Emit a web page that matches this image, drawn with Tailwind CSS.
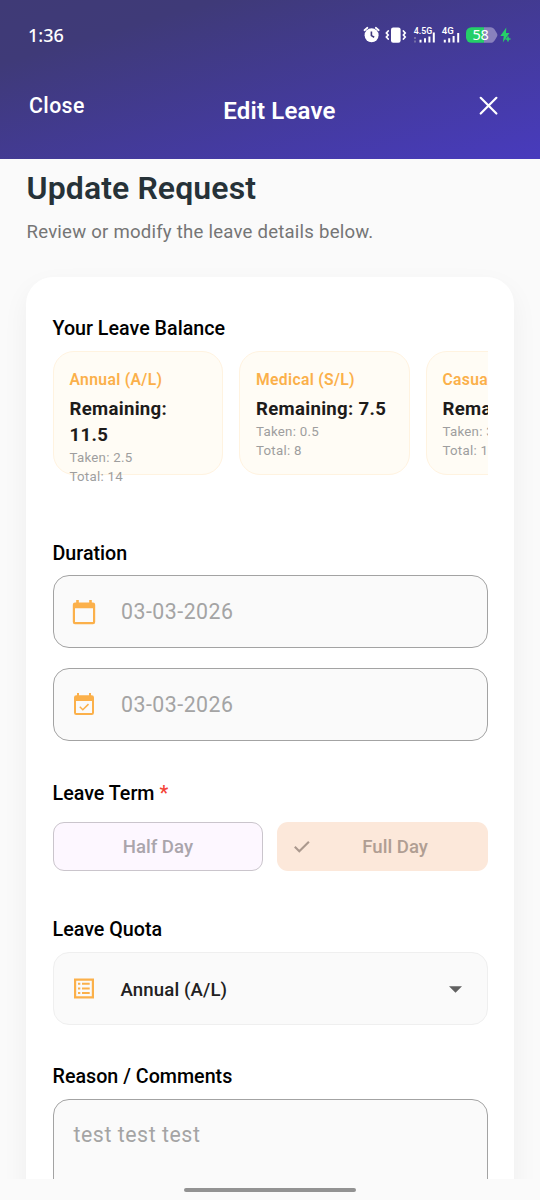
<!DOCTYPE html>
<html lang="en">
<head>
<meta charset="utf-8">
<title>Edit Leave</title>
<script src="https://cdn.jsdelivr.net/npm/@tailwindcss/browser@4"></script>
</head>
<body class="h-[1200px] w-[540px] overflow-hidden bg-[#fafafa] font-['Roboto',sans-serif] flex flex-col">
<header class="h-[159px] shrink-0 bg-[linear-gradient(to_bottom_right,#3f3a76_0%,#3f3a78_20%,#483bbd_100%)] text-white">
  <div class="flex h-[70px] items-center justify-between pl-7 pr-[26.5px]">
    <span class="font-['Noto_Sans',sans-serif] text-[18px] leading-6 font-medium">1:36</span>
    <svg class="block h-[24px] w-[152px]" viewBox="0 0 152 24">
      <g fill="none" stroke="#fff" stroke-linecap="round">
        <path d="M2.5 7.2 5.4 4.8M13.8 4.8 16.7 7.2" stroke-width="1.8"/>
        <path d="M26.2 8 24.4 10 26.2 12 24.4 14 26.2 16M41.400 8 43.200 10 41.400 12 43.200 14 41.400 16" stroke-width="1.700"/>
      </g>
      <circle cx="9.6" cy="12.2" r="7" fill="#fff"/>
      <path d="M9.4 8.4v4.2l2.8 1.6" fill="none" stroke="#40397c" stroke-width="1.6"/>
      <rect x="29" y="4.4" width="9.6" height="15.4" rx="2.2" fill="#fff"/>
      <g fill="#fff">
        <path d="M57.5 16.8h2v2.800h-2zM62 15.2h2v4.400H62zM66.400 13.400h2v6.200h-2zM70.800 9.500h2v10.100h-2z"/>
        <path d="M81.800 16.800h2v2.800h-2zM86.200 15.200h2v4.400h-2zM90.600 13h2v6.600h-2zM95.200 10h2v9.600h-2z"/>
      </g>
      <path d="M53 14v2M53 17.600v2" stroke="#8580ae" stroke-width="1.500"/>
      <text x="51.800" y="11" fill="#fff" font-family="Roboto" font-weight="600" font-size="9.600" textLength="18.500" lengthAdjust="spacingAndGlyphs">4.5G</text>
      <text x="79.800" y="11" fill="#fff" font-family="Roboto" font-weight="600" font-size="9.600" textLength="12" lengthAdjust="spacingAndGlyphs">4G</text>
      <path d="M109.500 4.200H122v15.600h-12.500a5.500 5.500 0 0 1-5.500-5.500V9.700a5.500 5.500 0 0 1 5.500-5.500z" fill="#25cf68"/>
      <path d="M122 4.200h6.500c2 0 3.300.9 4.300 2.600l2.200 3.700c.5.900.5 2 0 2.900l-2.200 3.800c-1 1.700-2.300 2.600-4.300 2.600H122z" fill="#8981bd"/>
      <text x="110.500" y="17.200" fill="#fff" font-family="Noto Sans" font-size="14.500" textLength="16.200">58</text>
      <path d="M144.300 4.500 138.300 13h3.500l-1 6.500 6.700-9.500h-3.500z" fill="#25cf68"/>
      <path d="M146 13.500v5M143.500 16h5" stroke="#25cf68" stroke-width="1.600"/>
    </svg>
  </div>
  <div class="grid h-[72px] grid-cols-[129px_1fr_110px] items-center">
    <span class="pl-[29px] text-[21.300px] leading-7 font-medium tracking-[0.400px]">Close</span>
    <h1 class="pt-[10px] text-center text-[24px] leading-8 font-semibold tracking-[0.200px]">Edit Leave</h1>
    <svg class="ml-[46px] size-[26px]" viewBox="0 0 26 26" fill="none" stroke="#fff" stroke-width="2.200" stroke-linecap="round"><path d="M4.700 4.800 20.400 20.500M20.400 4.800 4.700 20.500"/></svg>
  </div>
</header>
<main class="h-[1020px] shrink-0 overflow-hidden px-[26px]">
  <h2 class="pl-[0.600px] pt-2 text-[32px] leading-[42px] font-semibold tracking-[0.100px] text-[#263238]">Update Request</h2>
  <p class="mt-[10px] pl-[0.500px] text-[18.600px] leading-[26px] tracking-[0.220px] text-[#757575]">Review or modify the leave details below.</p>
  <section class="mt-8 h-[1100px] rounded-[27px] bg-white px-[26.500px] pt-[38px] text-black shadow-[0_10px_27px_rgba(0,0,0,0.05)]">
    <h3 class="text-[19.700px] leading-[28px] font-medium">Your Leave Balance</h3>
    <div class="mt-[8px] flex h-[144px] gap-[16px] overflow-hidden">
      <article class="h-[124px] w-[170.500px] shrink-0 rounded-[21px] border border-[#fff3e0] bg-[#fffcf5] px-4 pt-[17px]">
        <h4 class="text-[15.700px] leading-[22px] font-semibold tracking-[0.330px] text-[#fbb04a]">Annual (A/L)</h4>
        <p class="mt-[5px] text-[18.600px] leading-[26px] font-bold tracking-[0.300px] text-[#1d1b1a]">Remaining: 11.5</p>
        <p class="pt-px text-[13.300px] leading-[18.600px] tracking-[0.250px] text-[#9e9e9e]">Taken: 2.5<br>Total: 14</p>
      </article>
      <article class="h-[124px] w-[170.500px] shrink-0 rounded-[21px] border border-[#fff3e0] bg-[#fffcf5] px-4 pt-[17px]">
        <h4 class="text-[15.700px] leading-[22px] font-semibold tracking-[0.330px] text-[#fbb04a]">Medical (S/L)</h4>
        <p class="mt-[5px] text-[18.600px] leading-[26px] font-bold tracking-[0.300px] text-[#1d1b1a]">Remaining: 7.5</p>
        <p class="pt-px text-[13.300px] leading-[18.600px] tracking-[0.250px] text-[#9e9e9e]">Taken: 0.5<br>Total: 8</p>
      </article>
      <article class="h-[124px] w-[170.500px] shrink-0 rounded-[21px] border border-[#fff3e0] bg-[#fffcf5] px-4 pt-[17px]">
        <h4 class="text-[15.700px] leading-[22px] font-semibold tracking-[0.330px] text-[#fbb04a]">Casual (C/L)</h4>
        <p class="mt-[5px] text-[18.600px] leading-[26px] font-bold tracking-[0.300px] whitespace-nowrap text-[#1d1b1a]">Remaining: 11</p>
        <p class="pt-px text-[13.300px] leading-[18.600px] tracking-[0.250px] text-[#9e9e9e]">Taken: 3<br>Total: 14</p>
      </article>
    </div>
    <h3 class="mt-[45px] text-[19.700px] leading-[28px] font-medium">Duration</h3>
    <div class="mt-[7px] flex h-[73px] items-center rounded-[16px] border border-[#a3a3a3] bg-[#fafafa] pl-[15.500px]">
      <svg class="size-[30px]" viewBox="0 0 30 30"><path d="M7.200 3h2.600v2.500h10.400V3h2.600v2.500H24a2.200 2.200 0 0 1 2.200 2.200V25A2.200 2.200 0 0 1 24 27.200H6A2.200 2.200 0 0 1 3.800 25V7.700A2.200 2.200 0 0 1 6 5.500h1.200zM6 11.300V25h18V11.300z" fill="#fbb04a" fill-rule="evenodd"/></svg>
      <span class="ml-[22px] text-[21.300px] tracking-[0.500px] text-[#a4a4a4]">03-03-2026</span>
    </div>
    <div class="mt-5 flex h-[73px] items-center rounded-[16px] border border-[#a3a3a3] bg-[#fafafa] pl-[15.500px]">
      <svg class="size-[30px]" viewBox="0 0 30 30"><path d="M8 3h2v2.200h10V3h2v2.200h.8A2.200 2.200 0 0 1 25 7.400v15.400a2.200 2.200 0 0 1-2.200 2.200H7.200A2.200 2.200 0 0 1 5 22.800V7.400a2.200 2.200 0 0 1 2.200-2.200H8zM7 11v12h16V11z" fill="#fbb04a" fill-rule="evenodd"/><path d="m10.800 16.800 3 3 5.700-5.700" fill="none" stroke="#fbb04a" stroke-width="1.500"/></svg>
      <span class="ml-[22px] text-[21.300px] tracking-[0.500px] text-[#a4a4a4]">03-03-2026</span>
    </div>
    <h3 class="mt-[39px] text-[19.700px] leading-[28px] font-medium">Leave Term <span class="text-[#f44336]">*</span></h3>
    <div class="mt-[14px] grid h-[49px] grid-cols-2 gap-[13.500px] text-[18.600px] font-medium">
      <div class="flex items-center justify-center rounded-[11px] border border-[#cac5cc] bg-[#fdf7ff] pt-[3px] text-[#aaa5ac]">Half Day</div>
      <div class="flex items-center rounded-[11px] bg-[#fce8da] text-[#b09e93]">
        <svg class="ml-[13px] size-6" viewBox="0 0 24 24" fill="none" stroke="#ab998e" stroke-width="2.100"><path d="m4.800 11.800 4.500 4.500L18.900 6.700"/></svg>
        <span class="flex-1 pt-[3px] pr-[11px] text-center">Full Day</span>
      </div>
    </div>
    <h3 class="mt-[45px] text-[19.700px] leading-[28px] font-medium">Leave Quota</h3>
    <div class="mt-[8px] flex h-[73px] items-center rounded-[16px] border border-[#efefef] bg-[#fafafa] pl-[15.500px] pr-[17.500px]">
      <svg class="size-[30px]" viewBox="0 0 30 30" fill="#fbb04a"><path d="M5 4.500h20v20H5zM7.200 6.700v15.600h15.600V6.700z" fill-rule="evenodd"/><path d="M9 8.800h2.300v2H9zM13 8.800h7.700v2H13zM9 13.500h2.300v2H9zM13 13.500h7.700v2H13zM9 18.100h2.300v2H9zM13 18.100h7.700v2H13z"/></svg>
      <span class="ml-[21.500px] flex-1 pt-[5px] text-[18.600px] font-medium tracking-[0.130px] text-[#212121]">Annual (A/L)</span>
      <svg class="mt-px h-[7px] w-[27px]" viewBox="0 0 27 7"><path d="M7 .3h13L13.500 6.800z" fill="#616161"/></svg>
    </div>
    <h3 class="mt-[38px] text-[19.700px] leading-[28px] font-medium">Reason / Comments</h3>
    <div class="mt-[8px] h-[150px] rounded-[16px] border border-[#a3a3a3] bg-[#fafafa] px-5 pt-[20px] text-[21.300px] leading-[30px] tracking-[0.550px] text-[#a4a4a4]">test test test</div>
  </section>
</main>
<footer class="flex h-[21px] shrink-0 justify-center bg-[#fafafa] pt-[9px]"><div class="h-1 w-[172px] rounded-full bg-[#929292]"></div></footer>
</body>
</html>
